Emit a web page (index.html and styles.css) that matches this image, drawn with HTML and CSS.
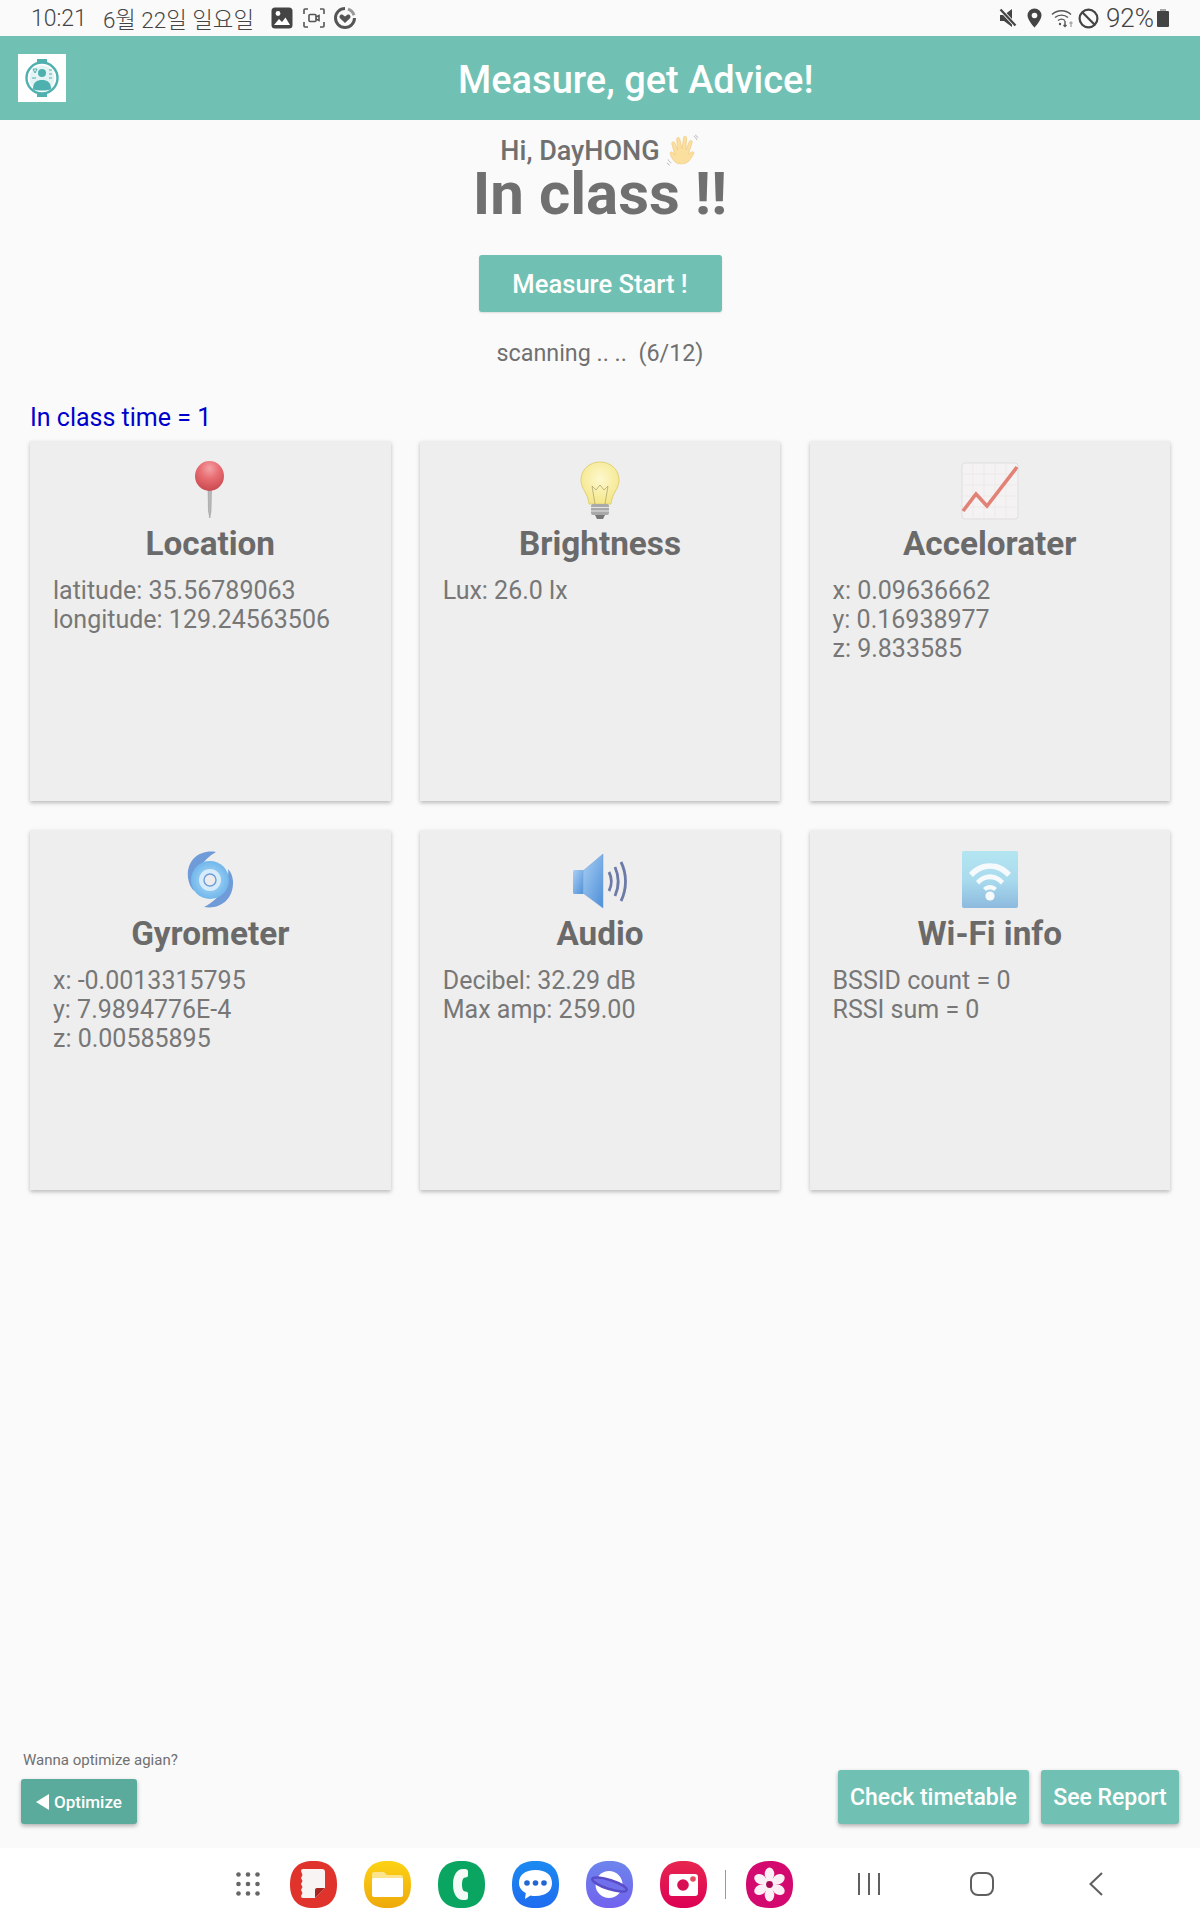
FILE: index.html
```html
<!DOCTYPE html>
<html lang="en">
<head>
    <meta charset="UTF-8">
    <meta name="viewport" content="width=device-width, initial-scale=1.0">
    <title>Measure, get Advice!</title>
    <link rel="stylesheet" href="styles.css">
</head>
<body>
    <div class="status-bar">
        <span class="clock">10:21</span>
        <span class="date">6월 22일 일요일</span>
        <svg class="st-gallery" width="22" height="22" viewBox="0 0 22 22"><rect x="0.5" y="0.5" width="21" height="21" rx="3.5" fill="#444"/><circle cx="7" cy="6.5" r="2.4" fill="#fff"/><path d="M3 18l5-6 3 3 3.5-4.5L19 18z" fill="#fff"/></svg>
        <svg class="st-record" width="22" height="20" viewBox="0 0 22 20" fill="none" stroke="#555" stroke-width="1.6"><path d="M1 6V2q0-1 1-1h3M17 1h3q1 0 1 1v4M21 14v4q0 1-1 1h-3M5 19H2q-1 0-1-1v-4"/><rect x="6" y="6.5" width="7" height="7" rx="1"/><path d="M13 9l3-1.5v5L13 11"/></svg>
        <svg class="st-heart" width="24" height="24" viewBox="0 0 24 24"><path d="M12 2.5a9.5 9.5 0 1 0 9.5 9.5" fill="none" stroke="#555" stroke-width="3"/><path d="M15 3.2a9.5 9.5 0 0 1 6 6" fill="none" stroke="#999" stroke-width="3"/><path d="M12 17l-5-4.8c-1.6-2 .9-4.7 3-3.2l2 1.4 2-1.4c2.1-1.5 4.600 1.200 3 3.200z" fill="#555"/></svg>
        <div class="status-right">
            <svg class="st-mute" width="18" height="20" viewBox="0 0 18 20"><path d="M1 7h4l8-6v18l-8-6H1z" fill="#444"/><path d="M1.500 1.500l15 16" stroke="#fafafa" stroke-width="4"/><path d="M1.500 1.500l15 16" stroke="#444" stroke-width="2.200"/></svg>
            <svg class="st-pin" width="15" height="20" viewBox="0 0 15 20"><path d="M7.500 0.500a7 7 0 0 1 7 7c0 4.500-7 12-7 12s-7-7.500-7-12a7 7 0 0 1 7-7z" fill="#444"/><circle cx="7.500" cy="7.500" r="2.800" fill="#fafafa"/></svg>
            <svg class="st-wifi" width="24" height="20" viewBox="0 0 24 20" fill="none" stroke="#555" stroke-width="1.400"><path d="M1 6.500C6 1.500 15 1.500 20 6.500M4 9.500c3.500-3.200 9.500-3.200 13 0M7 12.500c2-1.600 5-1.600 7 0"/><circle cx="9" cy="16" r="1.200" fill="#555" stroke="none"/><path d="M14 13v5.500M12.500 17l1.500 1.500 1.500-1.500"/><path d="M20 19v-5M18.500 15.500L20 14l1.500 1.500" stroke="#aaa"/></svg>
            <svg class="st-block" width="21" height="21" viewBox="0 0 21 21" fill="none" stroke="#444" stroke-width="2.200"><circle cx="10.500" cy="10.500" r="8.900"/><path d="M4.300 4.300l12.400 12.400"/></svg>
            <span class="battery-pct">92%</span>
            <svg class="st-battery" width="12" height="18" viewBox="0 0 12 18"><rect x="3" y="0" width="6" height="2" fill="#aaa"/><rect x="0" y="2" width="12" height="16" rx="1" fill="#444"/></svg>
        </div>
    </div>

    <header class="app-bar">
        <div class="logo">
            <svg width="36" height="40" viewBox="0 0 36 40"><rect x="13" y="1" width="10" height="4" fill="#4fb0b0"/><rect x="13" y="35" width="10" height="4" fill="#4fb0b0"/><circle cx="18" cy="20" r="15.500" fill="none" stroke="#4fb0b0" stroke-width="2.400"/><circle cx="18" cy="20" r="12.500" fill="#e4f3f3"/><circle cx="18" cy="15" r="4" fill="#4fb0b0"/><path d="M9 31c0-7 4-9 9-9s9 2 9 9c-3 2-15 2-18 0z" fill="#4fb0b0"/><path d="M9 11h4l-2 4zM8 20h4M25 12h3M25 16h3M25 20h3" stroke="#4fb0b0" fill="none"/></svg>
        </div>
        <h1 class="app-title">Measure, get Advice!</h1>
    </header>

    <main class="content">
        <section class="hero">
            <div class="greeting">Hi, DayHONG
                <svg class="wave" width="34" height="34" viewBox="0 0 32 32"><path d="M12 28c-4-1-6-4-8-9-.8-2 1.500-3 2.500-1.500L8.500 20 5.500 9.500c-.5-2 2-3 2.800-1L11 15 10 5c-.2-2.200 2.600-2.500 3-.4L15 14l1.500-10.500c.3-2 3-1.800 2.900.3L18.700 15l3.300-8c.8-1.800 3.200-.8 2.600 1.100L21 19l3-2c1.700-1 3.200.8 1.800 2.300C23 23 22 29 12 28z" fill="#fbdf9e" stroke="#eec67c" stroke-width="0.600"/><path d="M26 2c1.500.8 2.500 2 3 3.500M27.500 1c1.200.6 2 1.500 2.500 2.500M2 24c.6 1.500 1.500 2.500 3 3.200M1 27c.6 1 1.500 2 2.500 2.500" fill="none" stroke="#aaa" stroke-width="0.800"/></svg>
            </div>
            <div class="state">In class !!</div>
            <button class="btn btn-start" type="button">Measure Start !</button>
            <p class="scan-text">scanning .. ..&nbsp; (6/12)</p>
        </section>

        <p class="class-time">In class time = 1</p>

        <section class="cards">
            <div class="card">
                <svg class="card-icon" viewBox="0 0 60 60">
                    <defs><radialGradient id="pinBall" cx="0.5" cy="0.25" r="0.75"><stop offset="0" stop-color="#f4a2a6"/><stop offset="0.45" stop-color="#e86d72"/><stop offset="1" stop-color="#c94a50"/></radialGradient></defs>
                    <path d="M28 26h3.500l-.5 24-1.200 7-1.300-7z" fill="#b9b9b9" stroke="#8f8f8f" stroke-width="0.500"/>
                    <ellipse cx="29.500" cy="15" rx="14.500" ry="15" fill="url(#pinBall)"/>
                </svg>
                <h2 class="card-title">Location</h2>
                <p class="card-text">latitude: 35.56789063<br>longitude: 129.24563506</p>
            </div>
            <div class="card">
                <svg class="card-icon" viewBox="0 0 60 60">
                    <defs><radialGradient id="bulbGlass" cx="0.5" cy="0.4" r="0.65"><stop offset="0" stop-color="#fdf8cf"/><stop offset="1" stop-color="#f4e583"/></radialGradient></defs>
                    <path d="M30 1C19 1 11 9 11 19c0 9 7 13 8 24h22c1-11 8-15 8-24C49 9 41 1 30 1z" fill="url(#bulbGlass)" stroke="#e0d078" stroke-width="1"/>
                    <path d="M25 43l-3-18 4 4 4-5 4 5 4-4-3 18" fill="none" stroke="#a59d6a" stroke-width="0.700"/>
                    <rect x="21" y="43" width="18" height="11" rx="2" fill="#a9a9a9"/>
                    <path d="M21 46.500h18M21 50h18" stroke="#e4e4e4" stroke-width="1"/>
                    <path d="M25 54h10l-2 4h-6z" fill="#777"/>
                </svg>
                <h2 class="card-title">Brightness</h2>
                <p class="card-text">Lux: 26.0 lx</p>
            </div>
            <div class="card">
                <svg class="card-icon" viewBox="0 0 60 60">
                    <rect x="2" y="2" width="56" height="56" rx="3" fill="#f4f2f2" stroke="#dfdfdf"/>
                    <path d="M2 13h56M2 24h56M2 35h56M2 46h56M13 2v56M24 2v56M35 2v56M46 2v56" stroke="#ebe3e3" stroke-width="0.500"/>
                    <path d="M3 50l13-17 11 12L57 6" fill="none" stroke="#e28276" stroke-width="3.600"/>
                </svg>
                <h2 class="card-title">Accelorater</h2>
                <p class="card-text">x: 0.09636662<br>y: 0.16938977<br>z: 9.833585</p>
            </div>
            <div class="card">
                <svg class="card-icon" viewBox="0 0 60 60">
                    <defs><radialGradient id="swirl" cx="0.5" cy="0.5" r="0.55"><stop offset="0" stop-color="#b5def8"/><stop offset="1" stop-color="#6ab3ea"/></radialGradient></defs>
                    <path d="M36 2C20-1 6 10 8 28c1 6 3 10 6 13-2-12 6-30 22-39z" fill="#6f9cd8"/>
                    <path d="M24 57c16 3 30-8 29-26-.5-5-2-9-5-12 2 14-8 30-24 38z" fill="#6f9cd8"/>
                    <circle cx="30" cy="30" r="19" fill="url(#swirl)"/>
                    <circle cx="30" cy="30" r="11" fill="#d6ecfa"/>
                    <circle cx="30" cy="30" r="6" fill="#ececec" stroke="#6f9cd8" stroke-width="1.400"/>
                </svg>
                <h2 class="card-title">Gyrometer</h2>
                <p class="card-text">x: -0.0013315795<br>y: 7.9894776E-4<br>z: 0.00585895</p>
            </div>
            <div class="card">
                <svg class="card-icon" viewBox="0 0 60 60">
                    <defs><linearGradient id="horn" x1="0" y1="0" x2="1" y2="1"><stop offset="0" stop-color="#a9cff3"/><stop offset="1" stop-color="#4d8fd8"/></linearGradient></defs>
                    <rect x="3" y="20" width="11" height="24" rx="1.500" fill="url(#horn)"/>
                    <path d="M13 21L33 4v54L13 43z" fill="url(#horn)" stroke="#6c9cd4" stroke-width="0.500"/>
                    <path d="M39 22c3 6 3 13 0 19M45 17c4 9 4 20 0 29M51 12c6 12 6 27 0 39" fill="none" stroke="#6d7aa8" stroke-width="2.800"/>
                </svg>
                <h2 class="card-title">Audio</h2>
                <p class="card-text">Decibel: 32.29 dB<br>Max amp: 259.00</p>
            </div>
            <div class="card">
                <svg class="card-icon" viewBox="0 0 60 60">
                    <defs><linearGradient id="wifiBg" x1="0" y1="0" x2="0" y2="1"><stop offset="0" stop-color="#b3e5f1"/><stop offset="0.5" stop-color="#a9dbee"/><stop offset="1" stop-color="#8dbade"/></linearGradient></defs>
                    <rect x="2" y="1" width="56" height="57" rx="2" fill="url(#wifiBg)"/>
                    <path d="M9 23C20 10 40 10 51 23l-4 4C37 16 23 16 13 27zM16 31c8-9 20-9 28 0l-3 3.500c-6-7-16-7-22 0zM23 38c4-4 10-4 14 0l-3 3c-2-2-6-2-8 0z" fill="#f6fafc"/>
                    <circle cx="30" cy="46" r="4.600" fill="#f6fafc"/>
                </svg>
                <h2 class="card-title">Wi-Fi info</h2>
                <p class="card-text">BSSID count = 0<br>RSSI sum = 0</p>
            </div>
        </section>

        <section class="bottom-actions">
            <div class="optimize">
                <p class="optimize-text">Wanna optimize agian?</p>
                <button class="btn btn-optimize" type="button"><span class="arrow-left"></span>Optimize</button>
            </div>
            <div class="right-buttons">
                <button class="btn btn-raised btn-timetable" type="button">Check timetable</button>
                <button class="btn btn-raised btn-report" type="button">See Report</button>
            </div>
        </section>
    </main>

    <nav class="nav-bar">
        <svg class="nav-grid" width="24" height="24" viewBox="0 0 24 24" fill="#666"><circle cx="2.500" cy="2.500" r="2.300"/><circle cx="12" cy="2.500" r="2.300"/><circle cx="21.500" cy="2.500" r="2.300"/><circle cx="2.500" cy="12" r="2.300"/><circle cx="12" cy="12" r="2.300"/><circle cx="21.500" cy="12" r="2.300"/><circle cx="2.500" cy="21.500" r="2.300"/><circle cx="12" cy="21.500" r="2.300"/><circle cx="21.500" cy="21.500" r="2.300"/></svg>

        <svg class="app-icon" viewBox="0 0 47 47"><path d="M23.500 0C39 0 47 8 47 23.500S39 47 23.500 47 0 39 0 23.500 8 0 23.500 0z" fill="#e0332c"/><path d="M11 10q0-2 2-2h19q3 0 3 3v16l-10 10H13q-2 0-2-2l1.500-3-1.500-3 1.500-3-1.500-3 1.500-3-1.500-3 1.500-3z" fill="#f7f4f3"/><path d="M35 27H27q-2 0-2 2v8z" fill="#a92420"/></svg>
        <svg class="app-icon" viewBox="0 0 47 47"><defs><linearGradient id="filesBg" x1="0" y1="0" x2="0" y2="1"><stop offset="0" stop-color="#fdd215"/><stop offset="1" stop-color="#eea90a"/></linearGradient></defs><path d="M23.500 0C39 0 47 8 47 23.500S39 47 23.500 47 0 39 0 23.500 8 0 23.500 0z" fill="url(#filesBg)"/><path d="M8 13q0-2 2-2h10l3 3h14q2 0 2 2v3H8z" fill="#fbe48c"/><rect x="8" y="17" width="31" height="19" rx="2" fill="#fff"/></svg>
        <svg class="app-icon" viewBox="0 0 47 47"><path d="M23.500 0C39 0 47 8 47 23.500S39 47 23.500 47 0 39 0 23.500 8 0 23.500 0z" fill="#0aa560"/><path d="M27 8h-2c-6 0-10 6-10 15.500S19 39 25 39h2q3 0 3-2.500v-4q0-2-2.500-2H27c-2 0-3-3-3-7s1-7 3-7h.500q2.500 0 2.500-2v-4Q30 8 27 8z" fill="#f4fbf7"/></svg>
        <svg class="app-icon" viewBox="0 0 47 47"><defs><linearGradient id="msgBg" x1="0" y1="0" x2="0" y2="1"><stop offset="0" stop-color="#1b8af0"/><stop offset="1" stop-color="#1f6cf0"/></linearGradient></defs><path d="M23.500 0C39 0 47 8 47 23.500S39 47 23.500 47 0 39 0 23.500 8 0 23.500 0z" fill="url(#msgBg)"/><path d="M23.500 9C34 9 40 14 40 22s-6 13-16.500 13c-2 0-3.500-.2-5-.6L13 38l.8-6C9 29.500 7 26 7 22 7 14 13 9 23.500 9z" fill="#fff"/><circle cx="15" cy="22" r="2.800" fill="#2166d6"/><circle cx="23.500" cy="22" r="2.800" fill="#2166d6"/><circle cx="32" cy="22" r="2.800" fill="#2166d6"/></svg>
        <svg class="app-icon" viewBox="0 0 47 47"><defs><linearGradient id="netBg" x1="0" y1="0" x2="0" y2="1"><stop offset="0" stop-color="#6c85ec"/><stop offset="1" stop-color="#7262ee"/></linearGradient></defs><path d="M23.500 0C39 0 47 8 47 23.500S39 47 23.500 47 0 39 0 23.500 8 0 23.500 0z" fill="url(#netBg)"/><circle cx="23" cy="23.500" r="13.500" fill="#fff"/><ellipse cx="23.500" cy="23.500" rx="18" ry="4.500" transform="rotate(18 23.500 23.500)" fill="#7070ec" stroke="#5a4dc8" stroke-width="2.600"/></svg>
        <svg class="app-icon" viewBox="0 0 47 47"><defs><linearGradient id="camBg" x1="0" y1="0" x2="0" y2="1"><stop offset="0" stop-color="#e7274f"/><stop offset="1" stop-color="#dd0055"/></linearGradient></defs><path d="M23.500 0C39 0 47 8 47 23.500S39 47 23.500 47 0 39 0 23.500 8 0 23.500 0z" fill="url(#camBg)"/><rect x="9" y="13" width="29" height="22" rx="3" fill="#fff"/><circle cx="23" cy="24" r="5.800" fill="#d80f55"/><circle cx="33" cy="18" r="2.800" fill="#e94a5e"/></svg>
        <span class="nav-divider"></span>
        <svg class="app-icon app-gallery" viewBox="0 0 47 47"><path d="M23.500 0C39 0 47 8 47 23.500S39 47 23.500 47 0 39 0 23.500 8 0 23.500 0z" fill="#d3096f"/><g fill="#fbeef5"><ellipse cx="23.500" cy="13" rx="4.800" ry="6.500"/><ellipse cx="23.500" cy="34" rx="4.800" ry="6.500"/><ellipse cx="23.500" cy="13" rx="4.800" ry="6.500" transform="rotate(60 23.500 23.500)"/><ellipse cx="23.500" cy="13" rx="4.800" ry="6.500" transform="rotate(120 23.500 23.500)"/><ellipse cx="23.500" cy="13" rx="4.800" ry="6.500" transform="rotate(240 23.500 23.500)"/><ellipse cx="23.500" cy="13" rx="4.800" ry="6.500" transform="rotate(300 23.500 23.500)"/><circle cx="23.500" cy="23.500" r="7"/></g><circle cx="23.500" cy="23.500" r="3.400" fill="#a80a55"/></svg>

        <svg class="nav-recent" width="22" height="24" viewBox="0 0 22 24" stroke="#5f5f5f" stroke-width="2"><path d="M1 1v22M11 1v22M21 1v22"/></svg>
        <svg class="nav-home" width="24" height="24" viewBox="0 0 24 24" fill="none" stroke="#5f5f5f" stroke-width="2"><rect x="1" y="1" width="22" height="22" rx="7"/></svg>
        <svg class="nav-back" width="14" height="24" viewBox="0 0 14 24" fill="none" stroke="#5f5f5f" stroke-width="2"><path d="M13 1L1.500 12 13 23"/></svg>
    </nav>
</body>
</html>
```

FILE: styles.css
```css
* {
    box-sizing: border-box;
}
html, body {
    margin: 0;
    padding: 0;
}
body {
    width: 1200px;
    height: 1920px;
    display: flex;
    flex-direction: column;
    font-family: Roboto, "Noto Sans CJK KR", sans-serif;
    background-color: #fafafa;
    color: #707070;
}

/* status bar */
.status-bar {
    height: 36px;
    flex-shrink: 0;
    display: flex;
    align-items: center;
    padding: 0 31px;
    color: #444;
    font-size: 23px;
    font-weight: 300;
}
.clock {
    margin-right: 16px;
}
.date {
    margin-right: 17px;
    font-size: 22.4px;
}
.st-record {
    margin-left: 10px;
}
.st-heart {
    margin-left: 8px;
}
.status-right {
    margin-left: auto;
    display: flex;
    align-items: center;
}
.st-pin {
    margin-left: 10px;
}
.st-wifi {
    margin-left: 9px;
}
.st-block {
    margin-left: 3px;
}
.battery-pct {
    margin-left: 7px;
    font-size: 26px;
}
.st-battery {
    margin-left: 3px;
}

/* header */
.app-bar {
    height: 84px;
    flex-shrink: 0;
    display: flex;
    align-items: center;
    padding-left: 18px;
    background-color: #70c1b3;
}
.logo {
    width: 48px;
    height: 48px;
    display: flex;
    align-items: center;
    justify-content: center;
    background: #fff;
}
.app-title {
    margin: 4px 0 0 392px;
    font-size: 38px;
    font-weight: 500;
    color: #fff;
}

/* main */
.content {
    flex: 1;
    display: flex;
    flex-direction: column;
}
.hero {
    display: flex;
    flex-direction: column;
    align-items: center;
}
.greeting {
    display: flex;
    align-items: center;
    gap: 6px;
    height: 30px;
    line-height: 30px;
    margin-top: 16px;
    font-size: 27px;
    font-weight: 500;
}
.state {
    height: 52px;
    line-height: 52px;
    margin-top: 2px;
    font-size: 60px;
    font-weight: 700;
}
.btn {
    border: none;
    border-radius: 3px;
    font-family: Roboto, sans-serif;
    font-weight: 500;
    color: #fff;
    background-color: #70c1b3;
    padding: 0;
}
.btn-start {
    width: 243px;
    height: 57px;
    margin-top: 35px;
    font-size: 25.6px;
    box-shadow: 0 1px 2px rgba(0, 0, 0, 0.12);
}
.scan-text {
    margin: 27px 0 0;
    font-size: 23.3px;
    line-height: 28px;
}
.class-time {
    margin: 36px 0 0 30px;
    font-size: 25px;
    line-height: 30px;
    color: #0000cd;
}
.cards {
    display: grid;
    grid-template-columns: repeat(3, 360.5px);
    grid-auto-rows: 360px;
    gap: 29.5px 29.25px;
    margin-top: 7.5px;
    padding-left: 30px;
}
.card {
    padding: 20px 23px;
    background-color: #eee;
    box-shadow: 0 2px 4px rgba(0, 0, 0, 0.25);
}
.card-icon {
    display: block;
    width: 60px;
    height: 60px;
    margin: 0 auto;
}
.card-title {
    margin: 3.5px 0 0;
    font-size: 33.3px;
    font-weight: 700;
    line-height: 40px;
    text-align: center;
    color: #6a6a6a;
}
.card-text {
    margin: 12px 0 0;
    font-size: 25px;
    line-height: 29px;
    color: #777;
}

/* bottom buttons */
.bottom-actions {
    margin-top: auto;
    display: flex;
    justify-content: space-between;
    align-items: flex-end;
    padding: 0 21px 24px;
}
.optimize-text {
    margin: 0 0 10px 2px;
    font-size: 15px;
    line-height: 18px;
}
.btn-optimize {
    display: flex;
    align-items: center;
    justify-content: center;
    gap: 5px;
    width: 116px;
    height: 45px;
    font-size: 17px;
    background-color: #5bab9c;
    box-shadow: 0 2px 4px rgba(0, 0, 0, 0.3);
}
.arrow-left {
    width: 0;
    height: 0;
    border-top: 8px solid transparent;
    border-bottom: 8px solid transparent;
    border-right: 13px solid #fff;
}
.right-buttons {
    display: flex;
    gap: 12px;
}
.btn-raised {
    height: 54px;
    font-size: 23px;
    box-shadow: 0 2px 4px rgba(0, 0, 0, 0.3);
}
.btn-timetable {
    width: 191px;
}
.btn-report {
    width: 138px;
}

/* nav bar */
.nav-bar {
    height: 72px;
    flex-shrink: 0;
    display: flex;
    align-items: center;
    padding-left: 236px;
    background-color: #fff;
}
.nav-grid {
    margin-right: 30px;
}
.app-icon {
    width: 47px;
    height: 47px;
    margin-right: 27px;
}
.nav-divider {
    width: 1px;
    height: 29px;
    margin: 0 20px 0 -9px;
    background-color: #999;
}
.app-icon.app-gallery {
    margin-right: 0;
}
.nav-recent {
    margin-left: 65px;
}
.nav-home {
    margin-left: 90px;
}
.nav-back {
    margin-left: 95px;
}
```
